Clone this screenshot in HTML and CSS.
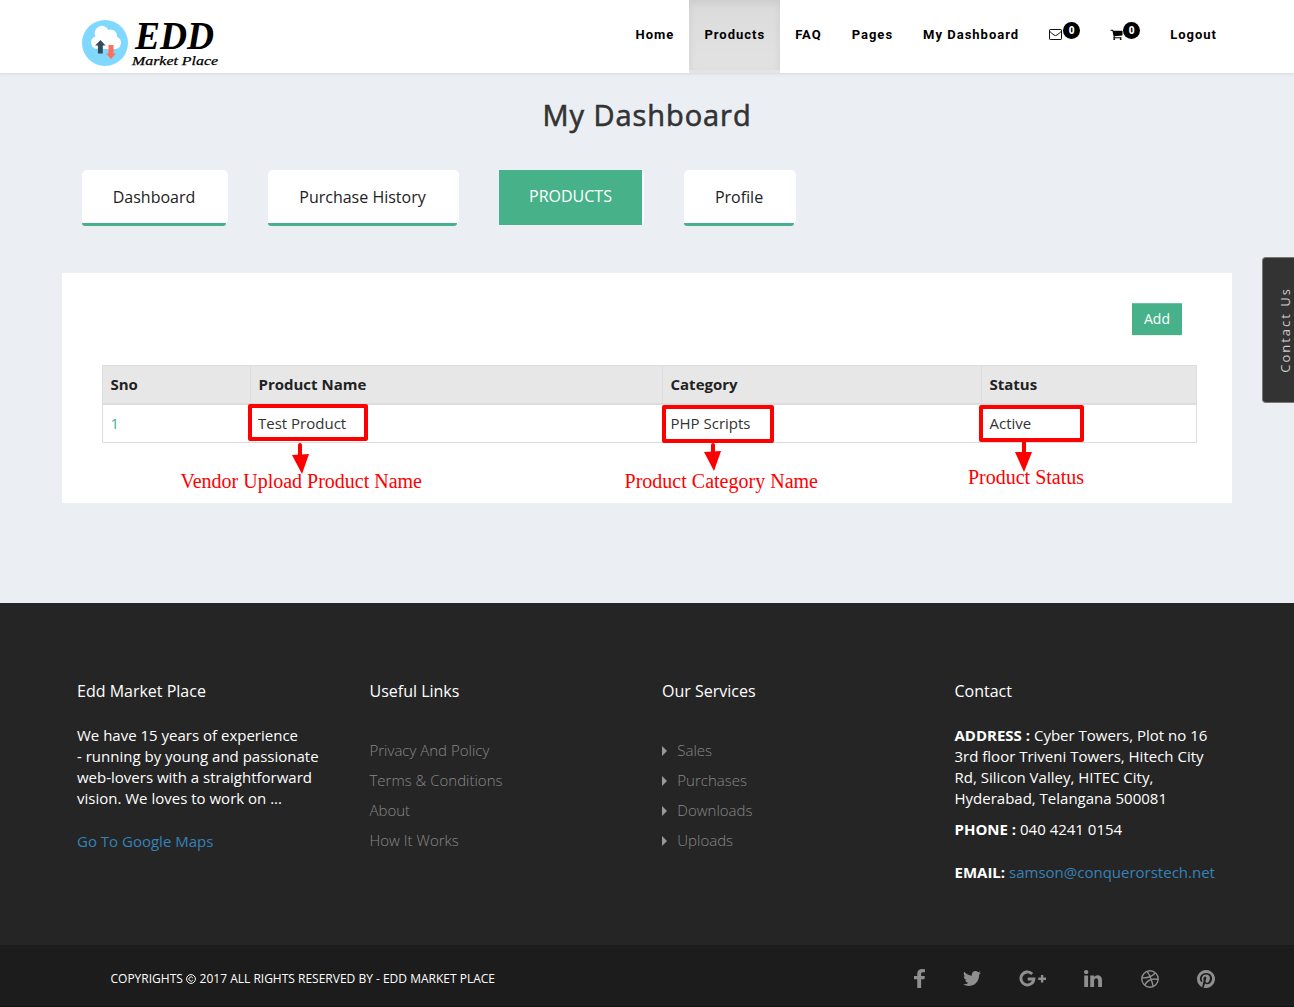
FILE: index.html
```html
<!DOCTYPE html>
<html lang="en">
<head>
<meta charset="utf-8">
<title>My Dashboard</title>
<link rel="stylesheet" href="styles.css">
</head>
<body>
<header class="header">
  <a class="logo">
    <svg width="140" height="52" viewBox="80 18 140 52">
      <circle cx="105" cy="43" r="23" fill="#80d8ff"/>
      <path d="M97 49a6.500 6.500 0 0 1-1.500-12.600 7 7 0 0 1 13-6.500 6.500 6.500 0 0 1 8.500 7 6.300 6.300 0 0 1-1.500 12.100z" fill="#fff"/>
      <path d="M100.500 40l5 5.500h-2.700v8h-4.900v-8h-2.700z" fill="#324a5e"/>
      <path d="M108.500 45h5v8.500h2.500l-5 5.500-5-5.500h2.500z" fill="#ff7058"/>
      <text class="logo-big" x="135" y="49" textLength="79" lengthAdjust="spacingAndGlyphs">EDD</text>
      <text class="logo-small" x="132" y="65" textLength="86" lengthAdjust="spacingAndGlyphs">Market Place</text>
    </svg>
  </a>
  <nav class="nav">
    <a>Home</a>
    <a class="active"><span>Products</span></a>
    <a>FAQ</a>
    <a>Pages</a>
    <a>My Dashboard</a>
    <a class="icon-link"><svg width="13" height="11" viewBox="0 0 13 11"><path d="M1.200.5h10.600q.7 0 .7.700v8.600q0 .7-.7.700H1.200q-.7 0-.7-.7V1.200q0-.7.700-.7zM.6 2.200Q3 4.700 5 6q1.500 1.100 3 0 2-1.300 4.400-3.800" fill="none" stroke="#111"/></svg><b class="count">0</b></a>
    <a class="icon-link cart"><svg width="13" height="13" viewBox="0 0 1792 1792"><path d="M704 1536q0 52-38 90t-90 38-90-38-38-90 38-90 90-38 90 38 38 90zm896 0q0 52-38 90t-90 38-90-38-38-90 38-90 90-38 90 38 38 90zm128-1088v512q0 24-16.500 42.500t-40.500 21.500l-1044 122q13 60 13 70 0 16-24 64h920q26 0 45 19t19 45-19 45-45 19h-1024q-26 0-45-19t-19-45q0-11 8-31.500t16-36 21.500-40 15.500-29.500l-177-823h-204q-26 0-45-19t-19-45 19-45 45-19h256q16 0 28.500 6.500t19.500 15.500 13 24.500 8 26 5.500 29.500 4.500 26h1201q26 0 45 19t19 45z"/></svg><b class="count">0</b></a>
    <a>Logout</a>
  </nav>
</header>

<main class="main">
  <h1 class="title">My Dashboard</h1>
  <ul class="tabs">
    <li class="tab-dash"><a>Dashboard</a></li>
    <li class="tab-hist"><a>Purchase History</a></li>
    <li class="tab-prod current"><a>PRODUCTS</a></li>
    <li class="tab-prof"><a>Profile</a></li>
  </ul>
  <section class="panel">
    <button class="add">Add</button>
    <table class="table">
      <colgroup><col class="c1"><col class="c2"><col class="c3"><col class="c4"></colgroup>
      <thead><tr><th>Sno</th><th>Product Name</th><th>Category</th><th>Status</th></tr></thead>
      <tbody><tr><td class="num">1</td><td>Test Product</td><td>PHP Scripts</td><td>Active</td></tr></tbody>
    </table>
    <svg class="marks" width="1170" height="230" viewBox="62 273 1170 230">
      <g fill="none" stroke="#f00" stroke-width="4" stroke-linejoin="round">
        <rect x="250" y="406" width="116" height="33"/>
        <rect x="664" y="407" width="108" height="34"/>
        <rect x="981" y="407" width="101" height="33"/>
        <path d="M300 445v11M713 445v8M1024 442v12" stroke-linecap="round"/>
      </g>
      <path d="M292 455l17-1-7 20zM704 452l17-1-7 20zM1015 452h17l-8 20z" fill="#f00"/>
      <text x="180.500" y="488" textLength="241.500">Vendor Upload Product Name</text>
      <text x="624.500" y="488" textLength="193.500">Product Category Name</text>
      <text x="968" y="484" textLength="116">Product Status</text>
    </svg>
  </section>
</main>
<aside class="contact-tab"><span>Contact Us</span></aside>

<footer class="footer">
  <div class="columns">
    <section>
      <h2>Edd Market Place</h2>
      <p>We have 15 years of experience<br>- running by young and passionate<br>web-lovers with a straightforward<br>vision. We loves to work on ...</p>
      <p class="spaced"><a class="blue">Go To Google Maps</a></p>
    </section>
    <section>
      <h2>Useful Links</h2>
      <ul class="links"><li>Privacy And Policy</li><li>Terms &amp; Conditions</li><li>About</li><li>How It Works</li></ul>
    </section>
    <section>
      <h2>Our Services</h2>
      <ul class="links arrows"><li>Sales</li><li>Purchases</li><li>Downloads</li><li>Uploads</li></ul>
    </section>
    <section>
      <h2>Contact</h2>
      <p><b>ADDRESS :</b> Cyber Towers, Plot no 16<br>3rd floor Triveni Towers, Hitech City<br>Rd, Silicon Valley, HITEC City,<br>Hyderabad, Telangana 500081</p>
      <p class="phone"><b>PHONE :</b> 040 4241 0154</p>
      <p class="spaced"><b>EMAIL:</b> <a class="blue">samson@conquerorstech.net</a></p>
    </section>
  </div>
  <div class="bottom">
    <div class="copy">COPYRIGHTS <svg width="10" height="10" viewBox="0 0 10 10"><g fill="none" stroke="#fff"><circle cx="5" cy="5" r="4.400"/><path d="M6.800 3.900a2.100 2.100 0 1 0 0 2.200"/></g></svg> 2017 ALL RIGHTS RESERVED BY - EDD MARKET PLACE</div>
    <div class="social">
      <svg width="11" height="19" viewBox="479 0 864 1664" preserveAspectRatio="none"><path d="M1343 12v264h-157q-86 0-116 36t-30 108v189h293l-39 296h-254v759h-306v-759h-255v-296h255v-218q0-186 104-288.500t277-102.500q147 0 228 12z"/></svg>
      <svg width="18" height="15" viewBox="108 256 1576 1280" preserveAspectRatio="none"><path d="M1684 408q-67 98-162 167 1 14 1 42 0 130-38 259.500t-115.500 248.500-184.500 210.500-258 146-323 54.500q-271 0-496-145 35 4 78 4 225 0 401-138-105-2-188-64.500t-114-159.500q33 5 61 5 43 0 85-11-112-23-185.500-111.500t-73.500-205.500v-4q68 38 146 41-66-44-105-115t-39-154q0-88 44-163 121 149 294.500 238.500t371.500 99.500q-8-38-8-74 0-134 94.500-228.500t228.500-94.500q140 0 236 102 109-21 205-78-37 115-142 178 93-10 186-50z"/></svg>
      <svg width="27" height="17" viewBox="0 0 27 17"><path d="M13.200 4a6.500 6.500 0 1 0 1.700 5H8.700" fill="none" stroke="#8f8f8f" stroke-width="2.900"/><path d="M21.900 5h2.400v2.600H27V10h-2.700v2.500h-2.400V10h-2.600V7.600h2.600z"/></svg>
      <svg width="18" height="17" viewBox="128 148 1536 1468" preserveAspectRatio="none"><path d="M477 625v991h-330v-991h330zm21-306q1 73-50.500 122t-135.500 49h-2q-82 0-132-49t-50-122q0-74 51.500-122.500t134.500-48.500 133 48.500 51 122.500zm1166 729v568h-329v-530q0-105-40.500-164.500t-126.500-59.500q-63 0-105.500 34.500t-63.500 85.500q-11 30-11 81v553h-329q2-399 2-647t-1-296l-1-48h329v144h-2q20-32 41-56t56.500-52 87-43.500 114.500-15.500q171 0 275 113.500t104 332.500z"/></svg>
      <svg width="18" height="18" viewBox="0 0 18 18"><g fill="none" stroke="#8f8f8f" stroke-width="1.400"><circle cx="9" cy="9" r="8.200"/><path d="M6 1.400q4 5 6.200 15.200M.9 7.900q8.500.1 13.400-5M3.700 15q4.300-7.500 13.400-5.500"/></g></svg>
      <svg width="18" height="18" viewBox="128 128 1536 1536"><path d="M1664 896q0 209-103 385.500t-279.500 279.500-385.500 103q-111 0-218-32 59-93 78-164 9-34 54-211 20 39 73 67.500t114 28.500q121 0 216-68.500t147-188.500 52-270q0-114-59.500-214t-172.500-163-255-63q-105 0-196 29t-154.500 77-109 110.500-67 129.500-21.500 134q0 104 40 183t117 111q30 12 38-20 2-7 8-31t8-30q6-23-11-43-51-61-51-151 0-151 104.500-259.500t273.500-108.500q151 0 235.500 82t84.500 213q0 170-68.500 289t-175.500 119q-61 0-98-43.500t-23-104.500q8-35 26.500-93.500t30-103 11.500-75.500q0-50-27-83t-77-33q-62 0-105 57t-43 142q0 73 25 122l-99 418q-17 70-13 177-206-91-333-281t-127-423q0-209 103-385.500t279.500-279.500 385.500-103 385.500 103 279.500 279.500 103 385.500z"/></svg>
    </div>
  </div>
</footer>
</body>
</html>
```

FILE: styles.css
```css
* { box-sizing: border-box; }
body {
  margin: 0;
  background: #ebeef3;
  font: 15px/21px "Open Sans", sans-serif;
  color: #333;
}
h1, h2, p, ul { margin: 0; padding: 0; }
ul { list-style: none; }

.header {
  height: 74px;
  padding: 0 62px 0 80px;
  display: flex;
  justify-content: space-between;
  background: #fff;
  border-bottom: 1px solid #dde0e6;
  box-shadow: 0 1px 3px rgba(0, 0, 0, .05);
}
.logo { padding-top: 18px; }
.logo svg { display: block; overflow: visible; }
.logo-big { font: italic bold 40px "Liberation Serif", serif; }
.logo-small {
  font: italic 13px "Liberation Serif", serif;
  stroke: #000;
  stroke-width: .25px;
}
.nav {
  display: flex;
  font: bold 13px/20px Roboto, sans-serif;
  letter-spacing: 1px;
  color: #000;
}
.nav a { height: 73px; padding: 25px 15px 0; white-space: nowrap; }
.nav .active { padding: 0 0 3px; background: #e5e3e4; }
.active span {
  display: block;
  height: 70px;
  padding: 25px 15px 0;
  background: linear-gradient(#dbdbdb, #e2e2e2);
  box-shadow: inset 0 3px 9px rgba(0, 0, 0, .075);
}
.nav .icon-link { display: flex; padding-top: 22px; }
.icon-link svg { margin-top: 7px; }
.cart svg { margin-top: 6px; }
.count {
  width: 17px;
  height: 17px;
  margin-left: 1px;
  border-radius: 50%;
  background: #000;
  color: #fff;
  font-size: 10px;
  line-height: 17px;
  letter-spacing: 0;
  text-align: center;
}
.cart .count { margin-left: 0; }

.main { height: 529px; padding: 21px 62px 0; }
.title {
  font-size: 29px;
  line-height: 40px;
  font-weight: 400;
  letter-spacing: .950px;
  -webkit-text-stroke: .6px #333;
  text-align: center;
}
.tabs {
  display: flex;
  gap: 40px;
  padding: 35px 20px 0;
  font-size: 16px;
}
.tabs li { height: 55px; padding-right: 2px; border-radius: 5px; background: #fff; }
.tabs a {
  display: block;
  height: 56px;
  padding-top: 17px;
  border-bottom: 3px solid #47b28a;
  border-radius: 3px;
  color: #222;
  text-align: center;
}
.tabs .current a {
  height: 55px;
  padding-top: 16px;
  border: 0;
  border-radius: 0;
  background: #47b28a;
  color: #fff;
}
.tab-dash { width: 146px; }
.tab-hist { width: 191px; }
.tab-prod { width: 145px; }
.tab-prof { width: 112px; }

.panel {
  position: relative;
  height: 230px;
  margin-top: 48px;
  padding: 30px 35px 0 40px;
  background: #fff;
}
.add {
  display: block;
  width: 50px;
  height: 32px;
  margin: 0 15px 30px auto;
  padding: 0 0 2px;
  border: 0;
  background: #47b28a;
  box-shadow: inset 0 1px 0 #6fc0a2, 0 1px 1px rgba(0, 0, 0, .06);
  color: #fff;
  font: 14px "Open Sans", sans-serif;
}
.table {
  width: 1095px;
  table-layout: fixed;
  border-collapse: collapse;
  border: 1px solid #ddd;
}
.c1 { width: 148px; }
.c2 { width: 412px; }
.c3 { width: 319px; }
.table th, .table td { padding: 8px 7.500px; border: 1px solid #ddd; text-align: left; }
.table th { border-bottom-width: 2px; background: #e7e7e7; color: #222; }
.table td + td { border-left: 0; }
.table .num { color: #47b28a; border-right: 0; }
.marks {
  position: absolute;
  left: 0;
  top: 0;
  fill: #f00;
  font: 20px "Liberation Serif", serif;
}
.contact-tab {
  position: absolute;
  right: 0;
  top: 257px;
  width: 32px;
  height: 146px;
  display: flex;
  align-items: center;
  padding-left: 13px;
  background: #333;
  border: 1px solid #777;
  border-right: 0;
  border-radius: 4px 0 0 4px;
  overflow: hidden;
}
.contact-tab span {
  writing-mode: vertical-rl;
  transform: rotate(180deg);
  width: 18px;
  flex: none;
  line-height: 18px;
  font-size: 13px;
  letter-spacing: 2px;
  color: #ccc;
}

.footer { background: #252525; color: #fff; }
.columns {
  display: grid;
  grid-template-columns: repeat(4, 292.500px);
  height: 342px;
  padding: 78px 0 0 77px;
}
.columns h2 { margin-bottom: 24px; font-size: 16px; line-height: 20px; font-weight: 400; }
.columns p { margin-bottom: 10px; white-space: nowrap; }
.columns .spaced { margin-top: 22px; }
.blue { color: #3582b8; }
.links { padding-top: 10px; line-height: 30px; font-weight: 300; color: #888; }
.arrows li { display: flex; align-items: center; gap: 10.300px; }
.arrows li::before {
  content: "";
  margin-top: 1px;
  border: solid transparent;
  border-width: 5px 0 5px 5px;
  border-left-color: #999;
}
.bottom {
  height: 62px;
  display: flex;
  justify-content: space-between;
  align-items: center;
  padding: 6px 79px 0 110.500px;
  background: #1c1c1c;
  border-bottom: 1px solid #171213;
}
.copy { font-size: 12px; }
.copy svg { vertical-align: -1px; margin-right: .5px; }
.social { display: flex; align-items: center; gap: 38.300px; fill: #8f8f8f; }
```
